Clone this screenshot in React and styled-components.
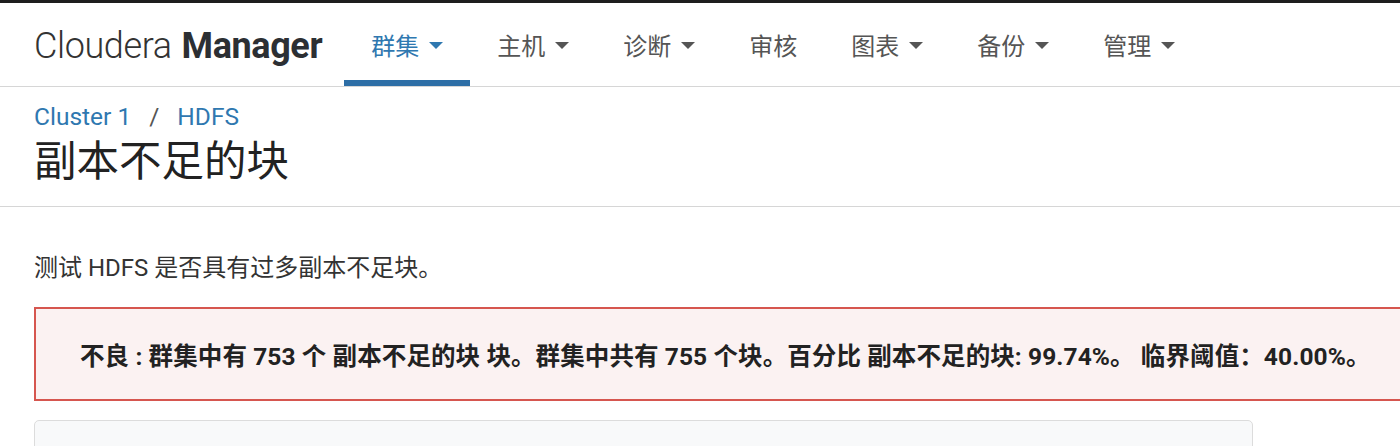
import React from 'react';
import styled, { createGlobalStyle } from 'styled-components';

const GlobalStyle = createGlobalStyle`
  html, body {
    margin: 0;
    padding: 0;
    background: #fff;
    overflow: hidden;
  }
  body {
    font-family: Roboto, "Noto Sans CJK SC", sans-serif;
    color: #222;
  }
  * { box-sizing: border-box; }
`

const Header = styled.header`
  display: flex;
  align-items: stretch;
  height: 87px;
  border-top: 3px solid #1e1e1e;
  border-bottom: 1px solid #d6d6d6;
  padding-left: 34px;
`

const Logo = styled.div`
  display: flex;
  align-items: center;
  font-family: Roboto, sans-serif;
  font-size: 36px;
  color: #333;
  letter-spacing: -0.4px;
  margin-right: 22px;
  padding-top: 2px;

  span {
    font-weight: 300;
    margin-right: 10px;
  }
  b {
    font-weight: 700;
    color: #2c2f33;
  }
`

const Nav = styled.nav`
  display: flex;
  align-items: stretch;
`

const NavItem = styled.a`
  display: flex;
  align-items: center;
  gap: 10px;
  padding: 6px 27px 0;
  font-size: 24px;
  color: ${p => (p.$active ? '#2f78b0' : '#555')};
  border-bottom: 6px solid ${p => (p.$active ? '#2d6ea6' : 'transparent')};
  text-decoration: none;
  cursor: pointer;
`

const Caret = styled.i`
  width: 0;
  height: 0;
  border-left: 7px solid transparent;
  border-right: 7px solid transparent;
  border-top: 7px solid currentColor;
  margin-top: 2px;
`

const TitleBlock = styled.section`
  padding: 14px 34px 18px;
  border-bottom: 1px solid #d6d6d6;
`

const Crumbs = styled.div`
  display: flex;
  align-items: center;
  gap: 18px;
  font-size: 24.5px;
  color: #2f78b0;
  height: 30px;

  em {
    font-style: normal;
    color: #555;
  }
`

const Title = styled.h1`
  margin: 5px 0 0;
  font-size: 42.5px;
  font-weight: 400;
  line-height: 52px;
  color: #222;
`

const Content = styled.main`
  padding: 46px 0 0 34px;
`

const Lead = styled.p`
  margin: 0 0 24px;
  font-size: 24px;
  line-height: 30px;
  color: #333;
`

const Alert = styled.div`
  display: flex;
  align-items: center;
  height: 94px;
  padding-left: 44px;
  background: #fbf2f2;
  border: 2px solid #d6564f;
  border-right: none;
  font-size: 24.5px;
  font-weight: 700;
  letter-spacing: 0.1px;
  color: #222;
  white-space: nowrap;
`

const Panel = styled.div`
  width: 1219px;
  height: 40px;
  margin-top: 19px;
  background: #f8f9fa;
  border: 1px solid #dcdcdc;
  border-radius: 5px;
`

const navItems = [
  { label: '群集', caret: true, active: true },
  { label: '主机', caret: true },
  { label: '诊断', caret: true },
  { label: '审核' },
  { label: '图表', caret: true },
  { label: '备份', caret: true },
  { label: '管理', caret: true },
];

export default function App() {
  return (
    <>
      <GlobalStyle />
      <Header>
        <Logo>
          <span>Cloudera</span>
          <b>Manager</b>
        </Logo>
        <Nav>
          {navItems.map(item => (
            <NavItem key={item.label} $active={item.active}>
              {item.label}
              {item.caret && <Caret />}
            </NavItem>
          ))}
        </Nav>
      </Header>
      <TitleBlock>
        <Crumbs>
          <span>Cluster 1</span>
          <em>/</em>
          <span>HDFS</span>
        </Crumbs>
        <Title>副本不足的块</Title>
      </TitleBlock>
      <Content>
        <Lead>测试 HDFS 是否具有过多副本不足块。</Lead>
        <Alert>
          不良 : 群集中有 753 个 副本不足的块 块。群集中共有 755 个块。百分比 副本不足的块: 99.74%。 临界阈值：40.00%。
        </Alert>
        <Panel />
      </Content>
    </>
  );
}
